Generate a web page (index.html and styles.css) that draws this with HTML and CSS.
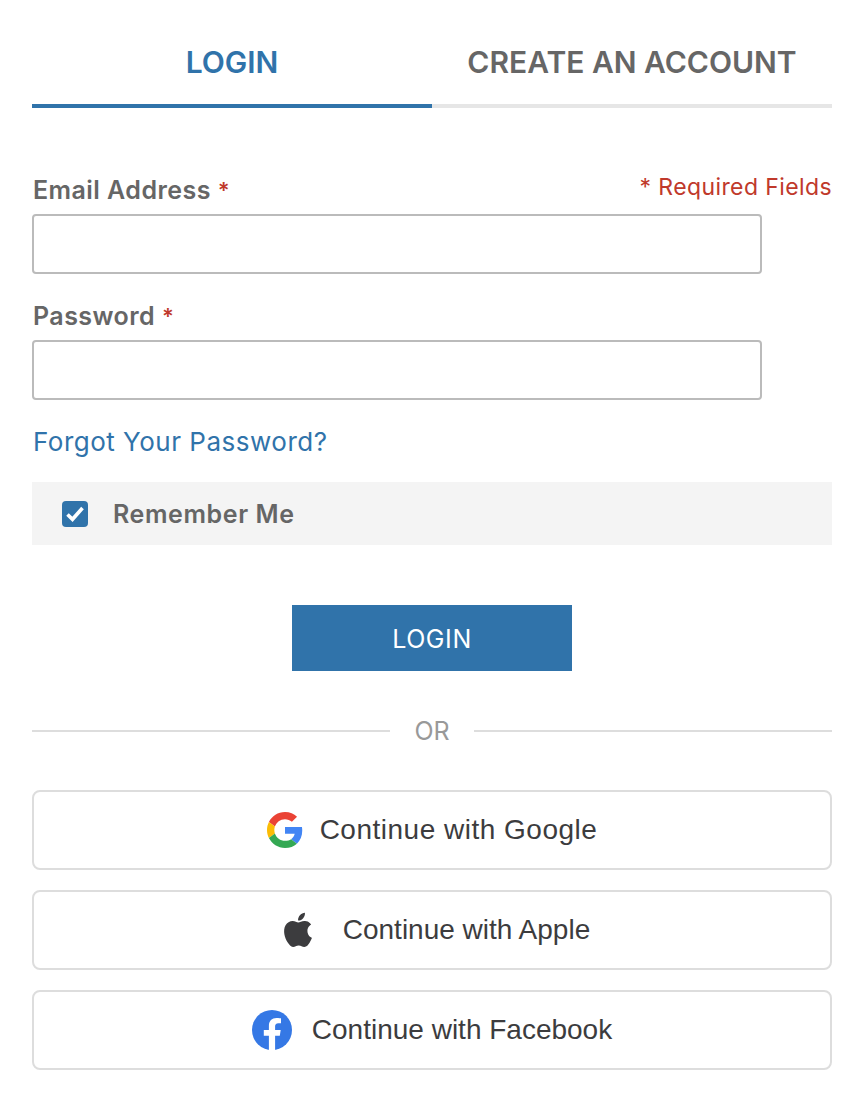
FILE: index.html
```html
<!DOCTYPE html>
<html lang="en">
<head>
    <meta charset="UTF-8">
    <meta name="viewport" content="width=device-width, initial-scale=1.0">
    <title>Login</title>
    <link rel="stylesheet" href="styles.css">
</head>
<body>
    <div class="tabs">
        <a class="tab active" href="#">LOGIN</a>
        <a class="tab" href="#">CREATE AN ACCOUNT</a>
    </div>
    <form class="login-form">
        <p class="required-note">* Required Fields</p>
        <div class="field">
            <label for="email">Email Address <span class="star">*</span></label>
            <input id="email" type="email">
        </div>
        <div class="field">
            <label for="password">Password <span class="star">*</span></label>
            <input id="password" type="password">
        </div>
        <a class="forgot" href="#">Forgot Your Password?</a>
        <div class="remember">
            <span class="checkbox">
                <svg width="26" height="26" viewBox="0 0 26 26"><path d="M5.5 13.5l5 4.8L20.5 7" fill="none" stroke="#fff" stroke-width="3.6"/></svg>
            </span>
            <span class="remember-text">Remember Me</span>
        </div>
        <button class="submit" type="button">LOGIN</button>
        <div class="divider"><span>OR</span></div>
        <button class="social google" type="button">
            <svg width="36" height="36" viewBox="0 0 48 48">
                <path fill="#EA4335" d="M24 9.5c3.54 0 6.71 1.22 9.21 3.6l6.85-6.85C35.9 2.38 30.47 0 24 0 14.62 0 6.51 5.38 2.56 13.22l7.98 6.19C12.43 13.72 17.74 9.5 24 9.5z"/>
                <path fill="#4285F4" d="M46.98 24.55c0-1.57-.15-3.09-.38-4.55H24v9.02h12.94c-.58 2.96-2.26 5.48-4.78 7.18l7.73 6c4.51-4.18 7.09-10.36 7.09-17.65z"/>
                <path fill="#FBBC05" d="M10.53 28.59c-.48-1.45-.76-2.99-.76-4.59s.27-3.14.76-4.59l-7.98-6.19C.92 16.46 0 20.12 0 24c0 3.88.92 7.54 2.56 10.78l7.97-6.19z"/>
                <path fill="#34A853" d="M24 48c6.48 0 11.93-2.13 15.89-5.81l-7.73-6c-2.15 1.45-4.92 2.3-8.16 2.3-6.26 0-11.57-4.22-13.47-9.91l-7.98 6.19C6.51 42.62 14.62 48 24 48z"/>
            </svg>
            <span>Continue with Google</span>
        </button>
        <button class="social apple" type="button">
            <svg width="40" height="40" viewBox="0 0 24 24"><path fill="#3c3c3e" d="M17.05 12.54c-.03-2.6 2.12-3.85 2.22-3.91-1.21-1.77-3.09-2.01-3.76-2.04-1.6-.16-3.12.94-3.93.94-.81 0-2.06-.92-3.39-.89-1.74.03-3.35 1.01-4.25 2.57-1.81 3.14-.46 7.8 1.3 10.35.86 1.25 1.89 2.65 3.23 2.6 1.3-.05 1.79-.84 3.36-.84 1.57 0 2.01.84 3.38.81 1.4-.02 2.28-1.27 3.14-2.53.99-1.45 1.4-2.85 1.42-2.92-.03-.01-2.69-1.03-2.72-4.14zM14.5 4.9c.71-.87 1.2-2.07 1.06-3.27-1.03.04-2.28.69-3.02 1.55-.66.77-1.24 1.99-1.09 3.17 1.15.09 2.33-.58 3.05-1.45z"/></svg>
            <span>Continue with Apple</span>
        </button>
        <button class="social" type="button">
            <svg width="40" height="40" viewBox="0 0 40 40"><circle cx="20" cy="20" r="20" fill="#3578e5"/><path fill="#fff" d="M27.8 25.8l.9-5.8h-5.6v-3.7c0-1.6.8-3.1 3.3-3.1H29V8.3s-2.3-.4-4.5-.4c-4.6 0-7.6 2.8-7.6 7.8V20h-5.1v5.8h5.1v14.1a20 20 0 0 0 6.2 0V25.8h4.7z"/></svg>
            <span>Continue with Facebook</span>
        </button>
    </form>
</body>
</html>
```

FILE: styles.css
```css
body {
    margin: 0;
    padding: 0 32px;
    font-family: Inter, "Liberation Sans", sans-serif;
    color: #666;
    background: #fff;
}
.tabs {
    display: flex;
    padding-top: 40px;
}
.tab {
    flex: 1;
    height: 64px;
    line-height: 45px;
    border-bottom: 4px solid #e6e6e6;
    text-align: center;
    font-size: 30px;
    font-weight: 600;
    color: #666;
    text-decoration: none;
}
.tab.active {
    color: #3073aa;
    border-bottom-color: #3073aa;
}
.login-form {
    position: relative;
    padding-top: 67px;
}
.required-note {
    position: absolute;
    top: 65px;
    right: 0;
    margin: 0;
    font-size: 23px;
    letter-spacing: .4px;
    color: #c0392b;
}
.field {
    margin-bottom: 27px;
}
.field label {
    display: block;
    margin-bottom: 9px;
    padding-left: 1px;
    font-size: 25px;
    line-height: 30px;
    font-weight: 600;
    letter-spacing: .45px;
}
.star {
    font-size: 22px;
    line-height: 1;
    vertical-align: 1px;
    color: #c0392b;
}
.field input {
    display: block;
    box-sizing: border-box;
    width: 730px;
    height: 60px;
    border: 2px solid #bbb;
    border-radius: 4px;
    background: #fff;
}
.forgot {
    display: block;
    padding-left: 1px;
    font-size: 26px;
    line-height: 30px;
    letter-spacing: .5px;
    color: #3073aa;
    text-decoration: none;
}
.remember {
    display: flex;
    align-items: center;
    height: 63px;
    margin-top: 25px;
    padding-left: 30px;
    background: #f4f4f4;
}
.checkbox {
    display: flex;
    align-items: center;
    justify-content: center;
    width: 26px;
    height: 26px;
    border-radius: 4px;
    background: #3073aa;
}
.remember-text {
    margin-left: 25px;
    font-size: 25px;
    font-weight: 600;
    letter-spacing: .6px;
}
.submit {
    display: block;
    width: 280px;
    height: 66px;
    margin: 60px auto 0;
    padding-top: 3px;
    border: 0;
    background: #3073aa;
    color: #fff;
    font-family: inherit;
    font-size: 25px;
    letter-spacing: .6px;
}
.divider {
    display: flex;
    align-items: center;
    gap: 24px;
    height: 40px;
    margin: 40px 0 39px;
    color: #999;
    font-size: 25px;
}
.divider::before,
.divider::after {
    content: "";
    flex: 1;
    border-top: 2px solid #ddd;
}
.social {
    display: flex;
    align-items: center;
    justify-content: center;
    gap: 20px;
    box-sizing: border-box;
    width: 100%;
    height: 80px;
    margin-top: 20px;
    border: 2px solid #ddd;
    border-radius: 8px;
    background: #fff;
    color: #3c3c3e;
    font-family: "Liberation Sans", sans-serif;
    font-size: 28px;
}
.divider + .social {
    margin-top: 0;
}
.google {
    gap: 17px;
    letter-spacing: .5px;
}
.apple {
    gap: 24px;
    padding-left: 11px;
}
```
